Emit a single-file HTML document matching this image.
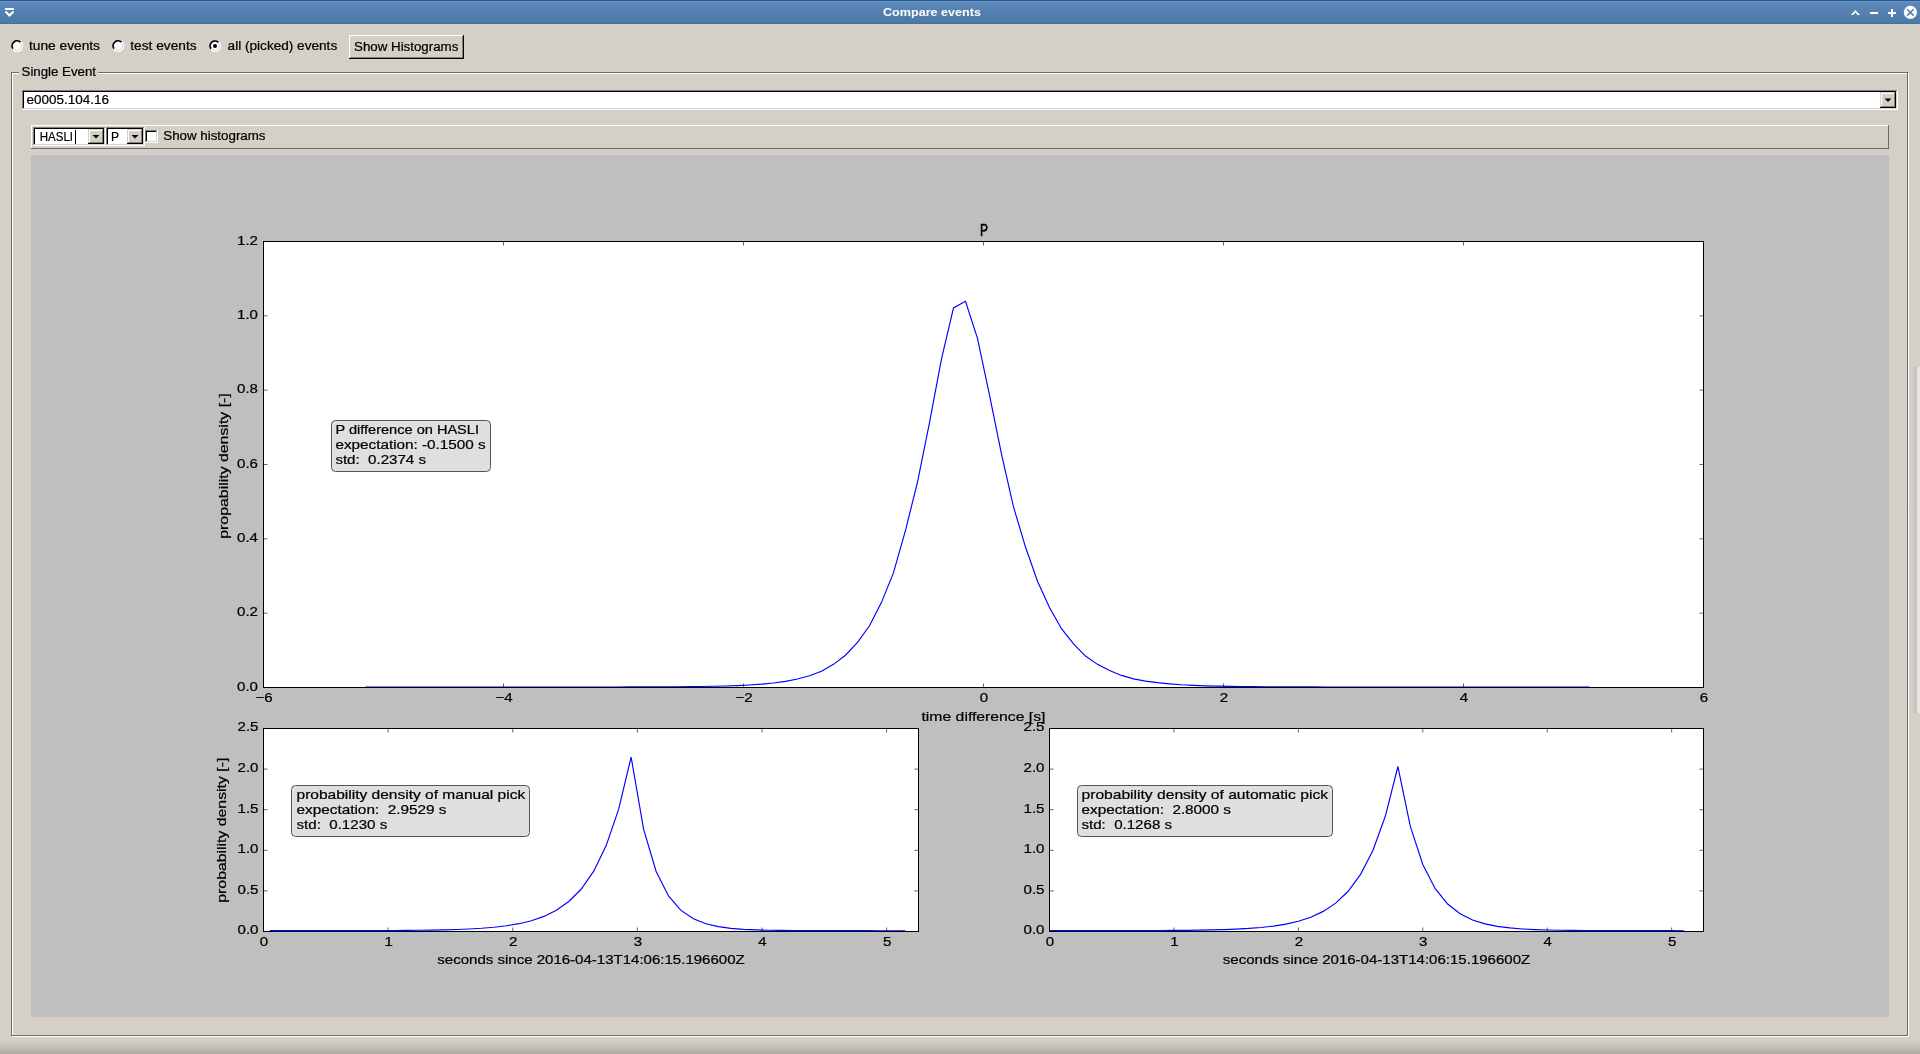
<!DOCTYPE html>
<html><head><meta charset="utf-8"><title>Compare events</title>
<style>html,body{margin:0;padding:0;width:1920px;height:1054px;overflow:hidden;background:#d4d0c8}
svg{display:block;will-change:transform} text{font-family:"Liberation Sans",sans-serif;stroke:currentColor;stroke-width:0.22px}</style></head>
<body><svg width="1920" height="1054" viewBox="0 0 1920 1054">
<rect x="0" y="0" width="1920" height="1054" fill="#d4d0c8"/>
<defs><linearGradient id="bshadow" x1="0" y1="0" x2="0" y2="1"><stop offset="0" stop-color="#d4d0c8"/><stop offset="1" stop-color="#b0aca5"/></linearGradient><linearGradient id="tbar" x1="0" y1="0" x2="0" y2="1"><stop offset="0" stop-color="#5d8abb"/><stop offset="1" stop-color="#4b78a8"/></linearGradient></defs>
<rect x="0" y="1041" width="1920" height="13" fill="url(#bshadow)"/>
<defs><linearGradient id="rshadow" x1="0" y1="0" x2="1" y2="0"><stop offset="0" stop-color="#d4d0c8" stop-opacity="0"/><stop offset="1" stop-color="#bdb9b2" stop-opacity="0.8"/></linearGradient></defs>
<rect x="1910" y="367" width="7" height="346" fill="url(#rshadow)"/>
<rect x="1917" y="367" width="3" height="346" fill="#e8e8e8"/>
<rect x="0" y="0" width="1920" height="24" fill="url(#tbar)"/>
<rect x="0" y="0" width="1920" height="1" fill="#33557a"/>
<rect x="0" y="1" width="1920" height="1" fill="#5e97d6"/>
<rect x="0" y="23" width="1920" height="1" fill="#46729f"/>
<rect x="5" y="8" width="9" height="2" fill="#fff"/>
<path d="M5.5 11.5 L9.5 15.5 L13.5 11.5" stroke="#fff" stroke-width="2.2" fill="none"/>
<text x="932" y="16" font-size="11.6" fill="#fff" color="#fff" font-weight="bold" text-anchor="middle" xml:space="preserve" textLength="98" lengthAdjust="spacingAndGlyphs" style="stroke-width:0">Compare events</text>
<path d="M1850.8 15 L1855.4 10 L1860 15 L1857.6 15 L1855.4 12.6 L1853.2 15 Z" fill="#fff"/>
<rect x="1870" y="12" width="8" height="2" fill="#fff"/>
<rect x="1888" y="12" width="8" height="2" fill="#fff"/>
<rect x="1891" y="9" width="2" height="8" fill="#fff"/>
<circle cx="1910.4" cy="12.4" r="6.6" fill="#fff"/>
<path d="M1907.2 9.2 L1913.6 15.6 M1913.6 9.2 L1907.2 15.6" stroke="#5482b4" stroke-width="1.6"/>
<circle cx="17" cy="45.8" r="6.2" fill="#fff"/>
<path d="M12.97 49.83 A5.7 5.7 0 0 1 21.03 41.77" stroke="#a09c96" stroke-width="1" fill="none"/>
<path d="M20.96 41.84 A5.6 5.6 0 0 1 13.04 49.76" stroke="#ffffff" stroke-width="1" fill="none"/>
<path d="M12.99 48.61 A4.9 4.9 0 0 1 20.34 42.22" stroke="#000" stroke-width="1.7" fill="none"/>
<path d="M20.42 42.72 A4.6 4.6 0 0 1 14.04 49.32" stroke="#d4d0c8" stroke-width="1" fill="none"/>
<circle cx="118" cy="45.8" r="6.2" fill="#fff"/>
<path d="M113.97 49.83 A5.7 5.7 0 0 1 122.03 41.77" stroke="#a09c96" stroke-width="1" fill="none"/>
<path d="M121.96 41.84 A5.6 5.6 0 0 1 114.04 49.76" stroke="#ffffff" stroke-width="1" fill="none"/>
<path d="M113.99 48.61 A4.9 4.9 0 0 1 121.34 42.22" stroke="#000" stroke-width="1.7" fill="none"/>
<path d="M121.42 42.72 A4.6 4.6 0 0 1 115.04 49.32" stroke="#d4d0c8" stroke-width="1" fill="none"/>
<circle cx="215" cy="45.9" r="6.2" fill="#fff"/>
<path d="M210.97 49.93 A5.7 5.7 0 0 1 219.03 41.87" stroke="#a09c96" stroke-width="1" fill="none"/>
<path d="M218.96 41.94 A5.6 5.6 0 0 1 211.04 49.86" stroke="#ffffff" stroke-width="1" fill="none"/>
<path d="M210.99 48.71 A4.9 4.9 0 0 1 218.34 42.32" stroke="#000" stroke-width="1.7" fill="none"/>
<path d="M218.42 42.82 A4.6 4.6 0 0 1 212.04 49.42" stroke="#d4d0c8" stroke-width="1" fill="none"/>
<circle cx="215" cy="45.9" r="2" fill="#000"/>
<text x="29" y="50" font-size="12.5" fill="#000" color="#000" font-weight="normal" text-anchor="start" xml:space="preserve" textLength="71" lengthAdjust="spacingAndGlyphs" >tune events</text>
<text x="130.3" y="50" font-size="12.5" fill="#000" color="#000" font-weight="normal" text-anchor="start" xml:space="preserve" textLength="66.3" lengthAdjust="spacingAndGlyphs" >test events</text>
<text x="227.6" y="50" font-size="12.5" fill="#000" color="#000" font-weight="normal" text-anchor="start" xml:space="preserve" textLength="109.6" lengthAdjust="spacingAndGlyphs" >all (picked) events</text>
<rect x="349" y="35" width="115" height="24" fill="#000"/>
<rect x="349" y="35" width="114" height="23" fill="#fff"/>
<rect x="350" y="36" width="113" height="22" fill="#808080"/>
<rect x="350" y="36" width="112" height="21" fill="#d4d0c8"/>
<text x="354.1" y="51" font-size="12.5" fill="#000" color="#000" font-weight="normal" text-anchor="start" xml:space="preserve" textLength="104.2" lengthAdjust="spacingAndGlyphs" >Show Histograms</text>
<rect x="11.5" y="72.5" width="1896" height="963" fill="none" stroke="#6c6a66"/>
<rect x="12.5" y="73.5" width="1896" height="963" fill="none" stroke="#fff"/>
<path d="M11.5 72.5 L11.5 1035.5 L1907.5 1035.5 L1907.5 72.5 Z" fill="none" stroke="#6c6a66"/>
<rect x="19" y="64" width="79" height="14" fill="#d4d0c8"/>
<text x="21.6" y="76" font-size="12.5" fill="#000" color="#000" font-weight="normal" text-anchor="start" xml:space="preserve" textLength="74.4" lengthAdjust="spacingAndGlyphs" >Single Event</text>
<rect x="22" y="90" width="1876" height="20" fill="#fff"/>
<rect x="22" y="90" width="1875" height="19" fill="#808080"/>
<rect x="23" y="91" width="1874" height="18" fill="#d4d0c8"/>
<rect x="23" y="91" width="1873" height="17" fill="#000"/>
<rect x="24" y="92" width="1872" height="16" fill="#fff"/>
<rect x="1880" y="92" width="16" height="16" fill="#000"/>
<rect x="1880" y="92" width="15" height="15" fill="#d4d0c8"/>
<rect x="1881" y="93" width="14" height="14" fill="#808080"/>
<rect x="1881" y="93" width="13" height="13" fill="#fff"/>
<rect x="1882" y="94" width="12" height="12" fill="#d4d0c8"/>
<path d="M1884.5 98.5 L1891.5 98.5 L1888.0 102.0 Z" fill="#000"/>
<text x="26.6" y="104" font-size="12.5" fill="#000" color="#000" font-weight="normal" text-anchor="start" xml:space="preserve" textLength="82.4" lengthAdjust="spacingAndGlyphs" >e0005.104.16</text>
<rect x="31" y="125" width="1858" height="24" fill="#6c6a66"/>
<rect x="31" y="125" width="1857" height="23" fill="#fff"/>
<rect x="32" y="126" width="1856" height="22" fill="#d4d0c8"/>
<rect x="33" y="127" width="73" height="19" fill="#fff"/>
<rect x="33" y="127" width="72" height="18" fill="#808080"/>
<rect x="34" y="128" width="71" height="17" fill="#d4d0c8"/>
<rect x="34" y="128" width="70" height="16" fill="#000"/>
<rect x="35" y="129" width="69" height="15" fill="#fff"/>
<rect x="88" y="129" width="16" height="15" fill="#000"/>
<rect x="88" y="129" width="15" height="14" fill="#d4d0c8"/>
<rect x="89" y="130" width="14" height="13" fill="#808080"/>
<rect x="89" y="130" width="13" height="12" fill="#fff"/>
<rect x="90" y="131" width="12" height="11" fill="#d4d0c8"/>
<path d="M92.5 135.0 L99.5 135.0 L96.0 138.5 Z" fill="#000"/>
<text x="39.8" y="141" font-size="12.5" fill="#000" color="#000" font-weight="normal" text-anchor="start" xml:space="preserve" textLength="33.2" lengthAdjust="spacingAndGlyphs" >HASLI</text>
<rect x="75" y="130" width="1" height="14" fill="#000"/>
<rect x="106" y="127" width="39" height="19" fill="#fff"/>
<rect x="106" y="127" width="38" height="18" fill="#808080"/>
<rect x="107" y="128" width="37" height="17" fill="#d4d0c8"/>
<rect x="107" y="128" width="36" height="16" fill="#000"/>
<rect x="108" y="129" width="35" height="15" fill="#fff"/>
<rect x="127" y="129" width="16" height="15" fill="#000"/>
<rect x="127" y="129" width="15" height="14" fill="#d4d0c8"/>
<rect x="128" y="130" width="14" height="13" fill="#808080"/>
<rect x="128" y="130" width="13" height="12" fill="#fff"/>
<rect x="129" y="131" width="12" height="11" fill="#d4d0c8"/>
<path d="M131.5 135.0 L138.5 135.0 L135.0 138.5 Z" fill="#000"/>
<text x="111" y="141" font-size="12.5" fill="#000" color="#000" font-weight="normal" text-anchor="start" xml:space="preserve" textLength="8" lengthAdjust="spacingAndGlyphs" >P</text>
<rect x="145" y="130" width="13" height="13" fill="#fff"/>
<rect x="145" y="130" width="12" height="12" fill="#808080"/>
<rect x="146" y="131" width="11" height="11" fill="#d4d0c8"/>
<rect x="146" y="131" width="10" height="10" fill="#000"/>
<rect x="147" y="132" width="9" height="9" fill="#fff"/>
<text x="163.3" y="140" font-size="12.5" fill="#000" color="#000" font-weight="normal" text-anchor="start" xml:space="preserve" textLength="102.2" lengthAdjust="spacingAndGlyphs" >Show histograms</text>
<rect x="31" y="155" width="1858" height="862" fill="#bfbfbf"/>
<rect x="263.5" y="241.5" width="1440.0" height="446.0" fill="#fff"/>
<polyline fill="none" stroke="#0000ff" stroke-width="1.15" points="365.50,687.00 377.50,687.00 389.50,687.00 401.50,687.00 413.50,687.00 425.50,687.00 437.50,687.00 449.50,687.00 461.50,687.00 473.50,687.00 485.50,687.00 497.50,687.00 509.50,687.00 521.50,687.00 533.50,687.00 545.50,686.99 557.50,686.99 569.50,686.99 581.50,686.98 593.50,686.98 605.50,686.97 617.50,686.95 629.50,686.93 641.50,686.91 653.50,686.87 665.50,686.82 677.50,686.74 689.50,686.64 701.50,686.49 713.50,686.28 725.50,685.98 737.50,685.56 749.50,684.98 761.50,684.15 773.50,682.99 785.50,681.35 797.50,679.05 809.50,675.80 821.50,671.22 833.50,664.35 845.50,655.22 857.50,642.45 869.50,625.74 881.50,602.36 893.50,572.65 905.50,530.33 917.50,482.07 929.50,422.67 941.50,358.81 953.50,307.95 965.50,301.27 977.50,338.40 989.50,395.20 1001.50,454.23 1013.50,506.94 1025.50,547.04 1037.50,581.19 1049.50,607.55 1061.50,628.71 1073.50,643.93 1085.50,656.04 1097.50,664.35 1109.50,670.41 1121.50,675.42 1133.50,678.83 1145.50,681.06 1157.50,682.62 1169.50,683.81 1181.50,684.77 1193.50,685.40 1205.50,685.85 1217.50,686.17 1229.50,686.40 1241.50,686.57 1253.50,686.69 1265.50,686.78 1277.50,686.84 1289.50,686.88 1301.50,686.92 1313.50,686.94 1325.50,686.96 1337.50,686.97 1349.50,686.98 1361.50,686.98 1373.50,686.99 1385.50,686.99 1397.50,686.99 1409.50,687.00 1421.50,687.00 1433.50,687.00 1445.50,687.00 1457.50,687.00 1469.50,687.00 1481.50,687.00 1493.50,687.00 1505.50,687.00 1517.50,687.00 1529.50,687.00 1541.50,687.00 1553.50,687.00 1565.50,687.00 1577.50,687.00 1589.50,687.00"/>
<rect x="263.5" y="241.5" width="1440.0" height="446.0" fill="none" stroke="#000" stroke-width="1"/>
<path d="M263.5 687.5 V683.5 M263.5 241.5 V245.5" stroke="#000" stroke-opacity="0.6" stroke-width="1"/>
<text transform="translate(264.0 702) scale(1.16 1)" x="0" y="0" font-size="13" fill="#000" color="#000" text-anchor="middle" xml:space="preserve">−6</text>
<path d="M503.5 687.5 V683.5 M503.5 241.5 V245.5" stroke="#000" stroke-opacity="0.6" stroke-width="1"/>
<text transform="translate(504.0 702) scale(1.16 1)" x="0" y="0" font-size="13" fill="#000" color="#000" text-anchor="middle" xml:space="preserve">−4</text>
<path d="M743.5 687.5 V683.5 M743.5 241.5 V245.5" stroke="#000" stroke-opacity="0.6" stroke-width="1"/>
<text transform="translate(744.0 702) scale(1.16 1)" x="0" y="0" font-size="13" fill="#000" color="#000" text-anchor="middle" xml:space="preserve">−2</text>
<path d="M983.5 687.5 V683.5 M983.5 241.5 V245.5" stroke="#000" stroke-opacity="0.6" stroke-width="1"/>
<text transform="translate(984.0 702) scale(1.16 1)" x="0" y="0" font-size="13" fill="#000" color="#000" text-anchor="middle" xml:space="preserve">0</text>
<path d="M1223.5 687.5 V683.5 M1223.5 241.5 V245.5" stroke="#000" stroke-opacity="0.6" stroke-width="1"/>
<text transform="translate(1224.0 702) scale(1.16 1)" x="0" y="0" font-size="13" fill="#000" color="#000" text-anchor="middle" xml:space="preserve">2</text>
<path d="M1463.5 687.5 V683.5 M1463.5 241.5 V245.5" stroke="#000" stroke-opacity="0.6" stroke-width="1"/>
<text transform="translate(1464.0 702) scale(1.16 1)" x="0" y="0" font-size="13" fill="#000" color="#000" text-anchor="middle" xml:space="preserve">4</text>
<path d="M1703.5 687.5 V683.5 M1703.5 241.5 V245.5" stroke="#000" stroke-opacity="0.6" stroke-width="1"/>
<text transform="translate(1704.0 702) scale(1.16 1)" x="0" y="0" font-size="13" fill="#000" color="#000" text-anchor="middle" xml:space="preserve">6</text>
<path d="M263.5 687.5 H267.5 M1703.5 687.5 H1699.5" stroke="#000" stroke-opacity="0.6" stroke-width="1"/>
<text transform="translate(258 690.7) scale(1.16 1)" x="0" y="0" font-size="13" fill="#000" color="#000" text-anchor="end" xml:space="preserve">0.0</text>
<path d="M263.5 613.1666666666666 H267.5 M1703.5 613.1666666666666 H1699.5" stroke="#000" stroke-opacity="0.6" stroke-width="1"/>
<text transform="translate(258 616.3666666666667) scale(1.16 1)" x="0" y="0" font-size="13" fill="#000" color="#000" text-anchor="end" xml:space="preserve">0.2</text>
<path d="M263.5 538.8333333333333 H267.5 M1703.5 538.8333333333333 H1699.5" stroke="#000" stroke-opacity="0.6" stroke-width="1"/>
<text transform="translate(258 542.0333333333333) scale(1.16 1)" x="0" y="0" font-size="13" fill="#000" color="#000" text-anchor="end" xml:space="preserve">0.4</text>
<path d="M263.5 464.5 H267.5 M1703.5 464.5 H1699.5" stroke="#000" stroke-opacity="0.6" stroke-width="1"/>
<text transform="translate(258 467.7) scale(1.16 1)" x="0" y="0" font-size="13" fill="#000" color="#000" text-anchor="end" xml:space="preserve">0.6</text>
<path d="M263.5 390.16666666666663 H267.5 M1703.5 390.16666666666663 H1699.5" stroke="#000" stroke-opacity="0.6" stroke-width="1"/>
<text transform="translate(258 393.3666666666666) scale(1.16 1)" x="0" y="0" font-size="13" fill="#000" color="#000" text-anchor="end" xml:space="preserve">0.8</text>
<path d="M263.5 315.8333333333333 H267.5 M1703.5 315.8333333333333 H1699.5" stroke="#000" stroke-opacity="0.6" stroke-width="1"/>
<text transform="translate(258 319.0333333333333) scale(1.16 1)" x="0" y="0" font-size="13" fill="#000" color="#000" text-anchor="end" xml:space="preserve">1.0</text>
<path d="M263.5 241.49999999999994 H267.5 M1703.5 241.49999999999994 H1699.5" stroke="#000" stroke-opacity="0.6" stroke-width="1"/>
<text transform="translate(258 244.69999999999993) scale(1.16 1)" x="0" y="0" font-size="13" fill="#000" color="#000" text-anchor="end" xml:space="preserve">1.2</text>
<text x="984" y="236" font-size="17" fill="#000" color="#000" font-weight="normal" text-anchor="middle" xml:space="preserve" textLength="8" lengthAdjust="spacingAndGlyphs" style="stroke-width:0.55px">P</text>
<text x="983.5" y="720.5" font-size="13" fill="#000" color="#000" font-weight="normal" text-anchor="middle" xml:space="preserve" textLength="124" lengthAdjust="spacingAndGlyphs" >time difference [s]</text>
<text transform="translate(227.6 466) rotate(-90)" x="0" y="0" font-size="13" text-anchor="middle" textLength="145.5" lengthAdjust="spacingAndGlyphs">propability density [-]</text>
<rect x="331.5" y="420.5" width="159.0" height="51.0" rx="4" ry="4" fill="#dfdfdf" stroke="#555" stroke-width="1"/>
<text x="335.4" y="434.3" font-size="13" fill="#000" color="#000" font-weight="normal" text-anchor="start" xml:space="preserve" textLength="143.6" lengthAdjust="spacingAndGlyphs" >P difference on HASLI</text>
<text x="335.4" y="449.3" font-size="13" fill="#000" color="#000" font-weight="normal" text-anchor="start" xml:space="preserve" textLength="150.3" lengthAdjust="spacingAndGlyphs" >expectation: -0.1500 s</text>
<text x="335.4" y="464.3" font-size="13" fill="#000" color="#000" font-weight="normal" text-anchor="start" xml:space="preserve" textLength="90.6" lengthAdjust="spacingAndGlyphs" >std:  0.2374 s</text>
<rect x="263.5" y="728.5" width="655.0" height="203.0" fill="#fff"/>
<polyline fill="none" stroke="#0000ff" stroke-width="1.15" points="269.73,930.69 282.19,930.69 294.65,930.69 307.12,930.68 319.58,930.68 332.04,930.67 344.50,930.65 356.96,930.63 369.43,930.60 381.89,930.56 394.35,930.50 406.81,930.42 419.27,930.30 431.74,930.12 444.20,929.88 456.66,929.52 469.12,929.02 481.58,928.30 494.05,927.27 506.51,925.79 518.97,923.69 531.43,920.69 543.89,916.40 556.36,910.27 568.82,901.51 581.28,889.01 593.74,871.14 606.20,845.61 618.67,809.15 631.13,757.05 643.59,829.12 656.05,871.27 668.51,895.94 680.98,910.36 693.44,918.80 705.90,923.74 718.36,926.63 730.82,928.32 743.29,929.31 755.75,929.88 768.21,930.22 780.67,930.42 793.13,930.54 805.59,930.60 818.06,930.64 830.52,930.67 842.98,930.68 855.44,930.69 867.90,930.69 880.37,930.70 892.83,930.70 905.29,930.70"/>
<rect x="263.5" y="728.5" width="655.0" height="203.0" fill="none" stroke="#000" stroke-width="1"/>
<path d="M263.50 931.5 V927.5 M263.50 728.5 V732.5" stroke="#000" stroke-opacity="0.6" stroke-width="1"/>
<text transform="translate(264.0 945.5) scale(1.16 1)" x="0" y="0" font-size="13" fill="#000" color="#000" text-anchor="middle" xml:space="preserve">0</text>
<path d="M388.12 931.5 V927.5 M388.12 728.5 V732.5" stroke="#000" stroke-opacity="0.6" stroke-width="1"/>
<text transform="translate(388.62 945.5) scale(1.16 1)" x="0" y="0" font-size="13" fill="#000" color="#000" text-anchor="middle" xml:space="preserve">1</text>
<path d="M512.74 931.5 V927.5 M512.74 728.5 V732.5" stroke="#000" stroke-opacity="0.6" stroke-width="1"/>
<text transform="translate(513.24 945.5) scale(1.16 1)" x="0" y="0" font-size="13" fill="#000" color="#000" text-anchor="middle" xml:space="preserve">2</text>
<path d="M637.36 931.5 V927.5 M637.36 728.5 V732.5" stroke="#000" stroke-opacity="0.6" stroke-width="1"/>
<text transform="translate(637.86 945.5) scale(1.16 1)" x="0" y="0" font-size="13" fill="#000" color="#000" text-anchor="middle" xml:space="preserve">3</text>
<path d="M761.98 931.5 V927.5 M761.98 728.5 V732.5" stroke="#000" stroke-opacity="0.6" stroke-width="1"/>
<text transform="translate(762.48 945.5) scale(1.16 1)" x="0" y="0" font-size="13" fill="#000" color="#000" text-anchor="middle" xml:space="preserve">4</text>
<path d="M886.60 931.5 V927.5 M886.60 728.5 V732.5" stroke="#000" stroke-opacity="0.6" stroke-width="1"/>
<text transform="translate(887.1 945.5) scale(1.16 1)" x="0" y="0" font-size="13" fill="#000" color="#000" text-anchor="middle" xml:space="preserve">5</text>
<path d="M263.5 931.5 H267.5 M918.5 931.5 H914.5" stroke="#000" stroke-opacity="0.6" stroke-width="1"/>
<text transform="translate(258.5 934.3) scale(1.16 1)" x="0" y="0" font-size="13" fill="#000" color="#000" text-anchor="end" xml:space="preserve">0.0</text>
<path d="M263.5 890.9 H267.5 M918.5 890.9 H914.5" stroke="#000" stroke-opacity="0.6" stroke-width="1"/>
<text transform="translate(258.5 893.6999999999999) scale(1.16 1)" x="0" y="0" font-size="13" fill="#000" color="#000" text-anchor="end" xml:space="preserve">0.5</text>
<path d="M263.5 850.3 H267.5 M918.5 850.3 H914.5" stroke="#000" stroke-opacity="0.6" stroke-width="1"/>
<text transform="translate(258.5 853.0999999999999) scale(1.16 1)" x="0" y="0" font-size="13" fill="#000" color="#000" text-anchor="end" xml:space="preserve">1.0</text>
<path d="M263.5 809.7 H267.5 M918.5 809.7 H914.5" stroke="#000" stroke-opacity="0.6" stroke-width="1"/>
<text transform="translate(258.5 812.5) scale(1.16 1)" x="0" y="0" font-size="13" fill="#000" color="#000" text-anchor="end" xml:space="preserve">1.5</text>
<path d="M263.5 769.1 H267.5 M918.5 769.1 H914.5" stroke="#000" stroke-opacity="0.6" stroke-width="1"/>
<text transform="translate(258.5 771.9) scale(1.16 1)" x="0" y="0" font-size="13" fill="#000" color="#000" text-anchor="end" xml:space="preserve">2.0</text>
<path d="M263.5 728.5 H267.5 M918.5 728.5 H914.5" stroke="#000" stroke-opacity="0.6" stroke-width="1"/>
<text transform="translate(258.5 731.3) scale(1.16 1)" x="0" y="0" font-size="13" fill="#000" color="#000" text-anchor="end" xml:space="preserve">2.5</text>
<text x="591.0" y="964" font-size="13" fill="#000" color="#000" font-weight="normal" text-anchor="middle" xml:space="preserve" textLength="307.4" lengthAdjust="spacingAndGlyphs" >seconds since 2016-04-13T14:06:15.196600Z</text>
<text transform="translate(226 830.2) rotate(-90)" x="0" y="0" font-size="13" text-anchor="middle" textLength="145" lengthAdjust="spacingAndGlyphs">probability density [-]</text>
<rect x="291.5" y="785.5" width="238.0" height="51.0" rx="4" ry="4" fill="#dfdfdf" stroke="#555" stroke-width="1"/>
<text x="296.5" y="799.3" font-size="13" fill="#000" color="#000" font-weight="normal" text-anchor="start" xml:space="preserve" textLength="228.7" lengthAdjust="spacingAndGlyphs" >probability density of manual pick</text>
<text x="296.5" y="814.3" font-size="13" fill="#000" color="#000" font-weight="normal" text-anchor="start" xml:space="preserve" textLength="150" lengthAdjust="spacingAndGlyphs" >expectation:  2.9529 s</text>
<text x="296.5" y="829.3" font-size="13" fill="#000" color="#000" font-weight="normal" text-anchor="start" xml:space="preserve" textLength="90.7" lengthAdjust="spacingAndGlyphs" >std:  0.1230 s</text>
<rect x="1049.5" y="728.5" width="654.0" height="203.0" fill="#fff"/>
<polyline fill="none" stroke="#0000ff" stroke-width="1.15" points="1049.50,930.69 1061.94,930.69 1074.39,930.68 1086.83,930.68 1099.27,930.67 1111.71,930.66 1124.16,930.64 1136.60,930.61 1149.04,930.57 1161.49,930.51 1173.93,930.43 1186.37,930.32 1198.82,930.15 1211.26,929.92 1223.70,929.59 1236.14,929.11 1248.59,928.43 1261.03,927.45 1273.47,926.06 1285.92,924.07 1298.36,921.23 1310.80,917.18 1323.24,911.38 1335.69,903.11 1348.13,891.28 1360.57,874.38 1373.02,850.25 1385.46,815.77 1397.90,766.51 1410.34,826.44 1422.79,864.50 1435.23,888.66 1447.67,904.00 1460.12,913.75 1472.56,919.94 1485.00,923.86 1497.45,926.36 1509.89,927.94 1522.33,928.95 1534.77,929.59 1547.22,929.99 1559.66,930.25 1572.10,930.42 1584.55,930.52 1596.99,930.59 1609.43,930.63 1621.87,930.65 1634.32,930.67 1646.76,930.68 1659.20,930.69 1671.65,930.69 1684.09,930.70"/>
<rect x="1049.5" y="728.5" width="654.0" height="203.0" fill="none" stroke="#000" stroke-width="1"/>
<path d="M1049.50 931.5 V927.5 M1049.50 728.5 V732.5" stroke="#000" stroke-opacity="0.6" stroke-width="1"/>
<text transform="translate(1050.0 945.5) scale(1.16 1)" x="0" y="0" font-size="13" fill="#000" color="#000" text-anchor="middle" xml:space="preserve">0</text>
<path d="M1173.93 931.5 V927.5 M1173.93 728.5 V732.5" stroke="#000" stroke-opacity="0.6" stroke-width="1"/>
<text transform="translate(1174.43 945.5) scale(1.16 1)" x="0" y="0" font-size="13" fill="#000" color="#000" text-anchor="middle" xml:space="preserve">1</text>
<path d="M1298.36 931.5 V927.5 M1298.36 728.5 V732.5" stroke="#000" stroke-opacity="0.6" stroke-width="1"/>
<text transform="translate(1298.86 945.5) scale(1.16 1)" x="0" y="0" font-size="13" fill="#000" color="#000" text-anchor="middle" xml:space="preserve">2</text>
<path d="M1422.79 931.5 V927.5 M1422.79 728.5 V732.5" stroke="#000" stroke-opacity="0.6" stroke-width="1"/>
<text transform="translate(1423.29 945.5) scale(1.16 1)" x="0" y="0" font-size="13" fill="#000" color="#000" text-anchor="middle" xml:space="preserve">3</text>
<path d="M1547.22 931.5 V927.5 M1547.22 728.5 V732.5" stroke="#000" stroke-opacity="0.6" stroke-width="1"/>
<text transform="translate(1547.72 945.5) scale(1.16 1)" x="0" y="0" font-size="13" fill="#000" color="#000" text-anchor="middle" xml:space="preserve">4</text>
<path d="M1671.65 931.5 V927.5 M1671.65 728.5 V732.5" stroke="#000" stroke-opacity="0.6" stroke-width="1"/>
<text transform="translate(1672.15 945.5) scale(1.16 1)" x="0" y="0" font-size="13" fill="#000" color="#000" text-anchor="middle" xml:space="preserve">5</text>
<path d="M1049.5 931.5 H1053.5 M1703.5 931.5 H1699.5" stroke="#000" stroke-opacity="0.6" stroke-width="1"/>
<text transform="translate(1044.5 934.3) scale(1.16 1)" x="0" y="0" font-size="13" fill="#000" color="#000" text-anchor="end" xml:space="preserve">0.0</text>
<path d="M1049.5 890.9 H1053.5 M1703.5 890.9 H1699.5" stroke="#000" stroke-opacity="0.6" stroke-width="1"/>
<text transform="translate(1044.5 893.6999999999999) scale(1.16 1)" x="0" y="0" font-size="13" fill="#000" color="#000" text-anchor="end" xml:space="preserve">0.5</text>
<path d="M1049.5 850.3 H1053.5 M1703.5 850.3 H1699.5" stroke="#000" stroke-opacity="0.6" stroke-width="1"/>
<text transform="translate(1044.5 853.0999999999999) scale(1.16 1)" x="0" y="0" font-size="13" fill="#000" color="#000" text-anchor="end" xml:space="preserve">1.0</text>
<path d="M1049.5 809.7 H1053.5 M1703.5 809.7 H1699.5" stroke="#000" stroke-opacity="0.6" stroke-width="1"/>
<text transform="translate(1044.5 812.5) scale(1.16 1)" x="0" y="0" font-size="13" fill="#000" color="#000" text-anchor="end" xml:space="preserve">1.5</text>
<path d="M1049.5 769.1 H1053.5 M1703.5 769.1 H1699.5" stroke="#000" stroke-opacity="0.6" stroke-width="1"/>
<text transform="translate(1044.5 771.9) scale(1.16 1)" x="0" y="0" font-size="13" fill="#000" color="#000" text-anchor="end" xml:space="preserve">2.0</text>
<path d="M1049.5 728.5 H1053.5 M1703.5 728.5 H1699.5" stroke="#000" stroke-opacity="0.6" stroke-width="1"/>
<text transform="translate(1044.5 731.3) scale(1.16 1)" x="0" y="0" font-size="13" fill="#000" color="#000" text-anchor="end" xml:space="preserve">2.5</text>
<text x="1376.5" y="964" font-size="13" fill="#000" color="#000" font-weight="normal" text-anchor="middle" xml:space="preserve" textLength="307.4" lengthAdjust="spacingAndGlyphs" >seconds since 2016-04-13T14:06:15.196600Z</text>
<rect x="1077.5" y="785.5" width="255.0" height="51.0" rx="4" ry="4" fill="#dfdfdf" stroke="#555" stroke-width="1"/>
<text x="1081.5" y="799.3" font-size="13" fill="#000" color="#000" font-weight="normal" text-anchor="start" xml:space="preserve" textLength="246.5" lengthAdjust="spacingAndGlyphs" >probability density of automatic pick</text>
<text x="1081.5" y="814.3" font-size="13" fill="#000" color="#000" font-weight="normal" text-anchor="start" xml:space="preserve" textLength="149.5" lengthAdjust="spacingAndGlyphs" >expectation:  2.8000 s</text>
<text x="1081.5" y="829.3" font-size="13" fill="#000" color="#000" font-weight="normal" text-anchor="start" xml:space="preserve" textLength="90.5" lengthAdjust="spacingAndGlyphs" >std:  0.1268 s</text>
</svg></body></html>
